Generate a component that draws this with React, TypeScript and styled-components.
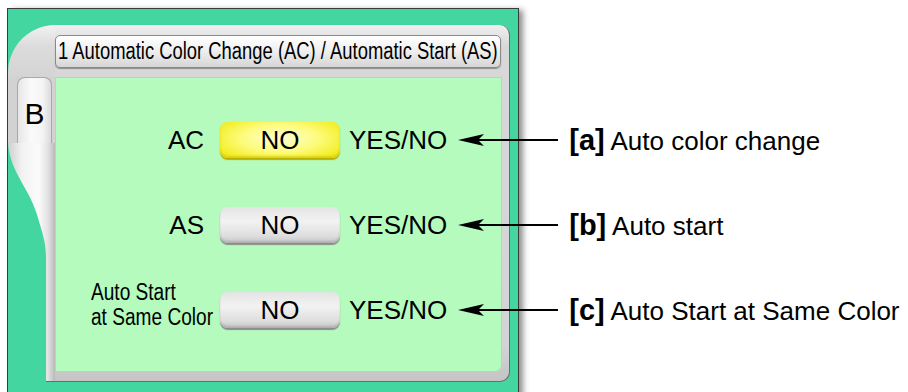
import styled, { createGlobalStyle } from "styled-components";

const GlobalStyle = createGlobalStyle`
  html, body {
    margin: 0;
    padding: 0;
    background: #ffffff;
    overflow: hidden;
  }
  body {
    font-family: "Liberation Sans", Arial, sans-serif;
    color: #000;
  }
`;

interface Setting {
  label: string;
  multiline?: boolean;
  active?: boolean;
  tag: string;
  caption: string;
}

const settings: Setting[] = [
  { label: "AC", active: true, tag: "[a]", caption: "Auto color change" },
  { label: "AS", tag: "[b]", caption: "Auto start" },
  { label: "Auto Start\nat Same Color", multiline: true, tag: "[c]", caption: "Auto Start at Same Color" },
];

function Arrow() {
  return (
    <ArrowSvg width="100" height="14" viewBox="0 0 100 14">
      <line x1="18" y1="7" x2="100" y2="7" stroke="#000" strokeWidth="2" />
      <polygon points="0,7 26,1 20,7 26,13" fill="#000" />
    </ArrowSvg>
  );
}

function SettingRow({ setting }: { setting: Setting }) {
  return (
    <Row>
      <LabelCell>
        {setting.multiline ? (
          <SmallLabel>
            {setting.label.split("\n").map((line) => (
              <div key={line}>{line}</div>
            ))}
          </SmallLabel>
        ) : (
          <Label>{setting.label}</Label>
        )}
      </LabelCell>
      <ToggleButton $active={setting.active}>NO</ToggleButton>
      <Options>YES/NO</Options>
      <Arrow />
      <Callout>
        <Tag>{setting.tag}</Tag> {setting.caption}
      </Callout>
    </Row>
  );
}

export default function App() {
  return (
    <>
      <GlobalStyle />
      <Stage>
        <Panel>
          <Frame>
            <SideCol>
              <Corner />
              <TabSlot>
                <Tab>B</Tab>
              </TabSlot>
              <Lower>
                <Sweep />
              </Lower>
            </SideCol>
            <MainCol>
              <HeaderArea>
                <HeaderBar>
                  <HeaderText>1 Automatic Color Change (AC) / Automatic Start (AS)</HeaderText>
                </HeaderBar>
              </HeaderArea>
              <Content>
                {settings.map((s) => (
                  <SettingRow key={s.tag} setting={s} />
                ))}
              </Content>
            </MainCol>
          </Frame>
        </Panel>
      </Stage>
    </>
  );
}

const Stage = styled.div`
  padding: 8px 0 0 7px;
`;

const Panel = styled.div`
  box-sizing: border-box;
  width: 512px;
  height: 400px;
  padding: 16px 8px 0 0;
  background: #43d6a0;
  border: 1px solid #3c3c3c;
  box-shadow: 5px 1px 6px -1px rgba(0, 0, 0, 0.45);
`;

const Frame = styled.div`
  display: flex;
  width: 502px;
  height: 357px;
`;

const SideCol = styled.div`
  display: flex;
  flex-direction: column;
  width: 47px;
  flex: none;
`;

const Corner = styled.div`
  height: 52px;
  background: linear-gradient(180deg, #f2f2f2 0%, #dcdcdc 40%, #d4d4d4 100%);
  border-top-left-radius: 47px 48px;
`;

const TabSlot = styled.div`
  height: 66px;
  background: #d2d2d2;
  padding-left: 9px;
  padding-right: 3px;
`;

const Tab = styled.div`
  height: 100%;
  box-sizing: border-box;
  border: 1px solid #a8a8a8;
  border-bottom: none;
  border-radius: 8px 8px 0 0;
  background: linear-gradient(90deg, #e6e6e6 0%, #fafafa 40%, #f4f4f4 75%, #dadada 100%);
  font-size: 30px;
  line-height: 30px;
  padding-top: 21px;
  text-align: center;
`;

const Lower = styled.div`
  flex: 1;
  display: flex;
  background: linear-gradient(90deg, #cfcfcf 0%, #f2f2f2 30%, #fbfbfb 65%, #e2e2e2 85%, #b9b9b9 100%);
  border-bottom: 1px solid #6b6b6b;
  border-bottom-left-radius: 4px;
`;

const Sweep = styled.div`
  width: 38px;
  flex: none;
  margin-bottom: -1px;
  background: #43d6a0;
  clip-path: path("M0 0 C 2 30, 22 45, 30 75 C 35 92, 38 100, 38 115 L 38 260 L 0 260 Z");
`;

const MainCol = styled.div`
  width: 455px;
  flex: none;
  box-sizing: border-box;
  display: flex;
  flex-direction: column;
  padding: 0 7px 9px 0;
  background: linear-gradient(180deg, #f0f0f0 0%, #d8d8d8 6%, #d4d4d4 90%, #c4c4c4 100%);
  border-right: 1px solid #6b6b6b;
  border-bottom: 1px solid #6b6b6b;
  border-radius: 0 10px 10px 0;
`;

const HeaderArea = styled.div`
  height: 52px;
  box-sizing: border-box;
  padding: 10px 1px 9px 0;
`;

const HeaderBar = styled.div`
  box-sizing: border-box;
  height: 33px;
  border: 1px solid #8a8a8a;
  border-radius: 5px;
  background: linear-gradient(180deg, #ffffff 0%, #f0f0f0 45%, #d6d6d6 100%);
  box-shadow: 0 1px 1px rgba(0, 0, 0, 0.35);
  display: flex;
  align-items: center;
  padding-left: 2px;
  overflow: hidden;
`;

const HeaderText = styled.span`
  display: inline-block;
  font-size: 23px;
  white-space: nowrap;
  transform: scaleX(0.8);
  transform-origin: left center;
`;

const Content = styled.div`
  flex: 1;
  min-width: 0;
  display: flex;
  flex-direction: column;
  gap: 47px;
  padding-top: 44px;
  background: #b4fbbd;
  border-radius: 0 0 7px 0;
  box-shadow: inset 0 0 0 1px rgba(150, 170, 150, 0.35);
`;

const Row = styled.div`
  display: flex;
  align-items: center;
  height: 38px;
`;

const LabelCell = styled.div`
  width: 165px;
  flex: none;
  display: flex;
  justify-content: flex-end;
`;

const Label = styled.span`
  font-size: 26px;
  padding-right: 16px;
`;

const SmallLabel = styled.div`
  font-size: 23px;
  line-height: 25px;
  white-space: nowrap;
  margin-right: 7px;
  margin-bottom: 10px;
  transform: scaleX(0.83);
  transform-origin: right center;
`;

const ToggleButton = styled.div<{ $active?: boolean }>`
  flex: none;
  box-sizing: border-box;
  width: 120px;
  height: 36px;
  border-radius: 8px;
  display: flex;
  align-items: center;
  justify-content: center;
  font-size: 26px;
  background: ${({ $active }) =>
    $active
      ? "radial-gradient(ellipse 60% 70% at 50% 45%, #ffffd2 0%, #fdfb7a 55%, #f2ec1c 100%)"
      : "linear-gradient(180deg, #e4e4e4 0%, #f2f2f2 40%, #dedede 80%, #c6c6c6 100%)"};
  box-shadow: ${({ $active }) =>
    $active
      ? "0 2px 1px #b9b000, inset 0 -2px 2px rgba(200, 190, 0, 0.6)"
      : "0 2px 1px #8c8c8c, inset 0 -2px 2px rgba(0, 0, 0, 0.12)"};
`;

const Options = styled.span`
  flex: none;
  font-size: 26px;
  margin-left: 9px;
  white-space: nowrap;
`;

const ArrowSvg = styled.svg`
  flex: none;
  display: block;
  margin-left: 11px;
`;

const Callout = styled.span`
  flex: none;
  margin-left: 11px;
  font-size: 26px;
  white-space: nowrap;
`;

const Tag = styled.b`
  font-size: 29px;
`;
